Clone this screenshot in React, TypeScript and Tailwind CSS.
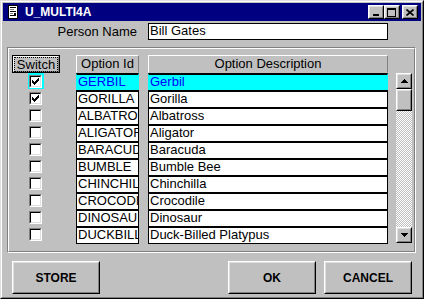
import React from "react";

const rows = [
  { id: "GERBIL", desc: "Gerbil", on: true },
  { id: "GORILLA", desc: "Gorilla", on: true },
  { id: "ALBATROSS", desc: "Albatross", on: false },
  { id: "ALIGATOR", desc: "Aligator", on: false },
  { id: "BARACUDA", desc: "Baracuda", on: false },
  { id: "BUMBLE", desc: "Bumble Bee", on: false },
  { id: "CHINCHILLA", desc: "Chinchilla", on: false },
  { id: "CROCODILE", desc: "Crocodile", on: false },
  { id: "DINOSAUR", desc: "Dinosaur", on: false },
  { id: "DUCKBILL", desc: "Duck-Billed Platypus", on: false },
];

function Raised({ className = "", children }: { className?: string; children?: React.ReactNode }) {
  return (
    <div className={`border border-t-white border-l-white border-r-black border-b-black ${className}`}>
      <div className="w-full h-full border border-t-[#dfdfdf] border-l-[#dfdfdf] border-r-[#808080] border-b-[#808080] bg-[#c0c0c0] flex items-center justify-center">
        {children}
      </div>
    </div>
  );
}

function Check() {
  const px: [number, number, number][] = [
    [6, 0, 1], [5, 1, 2], [0, 2, 1], [4, 2, 3], [0, 3, 2], [3, 3, 3], [0, 4, 5], [1, 5, 3], [2, 6, 1],
  ];
  return (
    <svg width="7" height="7" viewBox="0 0 7 7" shapeRendering="crispEdges">
      {px.map(([x, y, w], i) => (
        <rect key={i} x={x} y={y} width={w} height="1" fill="black" />
      ))}
    </svg>
  );
}

function Checkbox({ checked }: { checked: boolean }) {
  return (
    <div className="w-[13px] h-[13px] border border-t-[#808080] border-l-[#808080] border-r-white border-b-white">
      <div className="w-full h-full border border-t-black border-l-black border-r-[#dfdfdf] border-b-[#dfdfdf] bg-white flex items-center justify-center">
        {checked && <Check />}
      </div>
    </div>
  );
}

function Arrow({ down }: { down?: boolean }) {
  return (
    <svg width="7" height="4" viewBox="0 0 7 4" shapeRendering="crispEdges">
      <polygon points={down ? "0,0 7,0 3.5,4" : "3.5,0 7,4 0,4"} fill="black" />
    </svg>
  );
}

export default function App() {
  return (
    <div className="w-[424px] h-[299px] bg-[#c0c0c0] border border-t-[#dfdfdf] border-l-[#dfdfdf] border-r-black border-b-black font-['Liberation_Sans',Arial,sans-serif] text-black">
      <div className="w-full h-full border border-t-white border-l-white border-r-[#808080] border-b-[#808080] p-px">
        {/* title bar */}
        <div className="h-[18px] bg-[#000080] flex items-center">
          <svg width="10" height="14" viewBox="0 0 10 14" className="ml-[5px]" shapeRendering="crispEdges">
            <rect x="0" y="0" width="10" height="14" fill="white" />
            <rect x="0.5" y="0.5" width="9" height="13" fill="none" stroke="black" />
            <rect x="2" y="2" width="6" height="1" fill="black" />
            <rect x="2" y="4" width="4" height="1" fill="#808080" />
            <rect x="2" y="6" width="6" height="1" fill="black" />
            <rect x="2" y="8" width="3" height="1" fill="#808080" />
            <rect x="2" y="10" width="6" height="1" fill="black" />
            <rect x="6" y="8" width="2" height="2" fill="black" />
          </svg>
          <span className="ml-[7px] text-white font-bold text-[12px] leading-[14px]">U_MULTI4A</span>
          <div className="ml-auto flex items-center mr-[3px]">
            <Raised className="w-[16px] h-[14px]">
              <div className="w-[6px] h-[2px] bg-black mt-[6px] -ml-px" />
            </Raised>
            <Raised className="w-[16px] h-[14px]">
              <div className="w-[9px] h-[9px] border border-black border-t-2 -ml-px" />
            </Raised>
            <Raised className="w-[16px] h-[14px] ml-[2px]">
              <svg width="8" height="7" viewBox="0 0 8 7" className="-ml-px">
                <path d="M0.5 0.5 L7.5 6.5 M7.5 0.5 L0.5 6.5" stroke="black" strokeWidth="1.6" />
              </svg>
            </Raised>
          </div>
        </div>

        {/* person name */}
        <div className="mt-[2px] h-[17px] flex items-center text-[13px]">
          <div className="w-[134px] text-right leading-[17px]">Person Name</div>
          <div className="ml-[11px] w-[240px] h-[17px] border border-black bg-white pl-px leading-[13px]">Bill Gates</div>
        </div>

        {/* group box */}
        <div className="ml-[4px] mt-[7px] w-[409px] h-[206px] border border-t-[#808080] border-l-[#808080] border-r-white border-b-white">
          <div className="w-full h-full border border-t-white border-l-white border-r-[#808080] border-b-[#808080] flex items-start pt-[6px] text-[13px]">
            {/* switch + checkboxes */}
            <div className="w-[67px] flex flex-col">
              <div className="ml-[3px] w-[48px] h-[18px] border border-black">
                <div className="w-full h-full border border-t-white border-l-white border-r-[#808080] border-b-[#808080] flex items-center justify-center">
                  <span className="outline outline-1 outline-dotted outline-black leading-[13px] px-[2px]">Switch</span>
                </div>
              </div>
              {rows.map((r, i) => (
                <div key={r.id} className="h-[17px]">
                  <div className={`ml-[19px] w-[16px] h-[16px] pl-px pt-[2px] ${i === 0 ? "bg-[#00ffff]" : ""}`}>
                    <Checkbox checked={r.on} />
                  </div>
                </div>
              ))}
            </div>

            {/* option id */}
            <div className="w-[63px] flex flex-col">
              <div className="h-[18px] border border-t-white border-l-white border-r-[#808080] border-b-[#c0c0c0] flex items-center justify-center leading-[16px]">
                Option Id
              </div>
              {rows.map((r, i) => (
                <div
                  key={r.id}
                  className={`h-[17px] border-t-2 border-t-black border-x overflow-hidden whitespace-nowrap pl-px leading-[12px] pt-px ${
                    i === 0 ? "bg-[#00ffff] border-x-[#00ffff] text-[#0000ff]" : "bg-white border-x-black"
                  } ${i === rows.length - 1 ? "border-b border-b-black h-[18px]" : ""}`}
                >
                  {r.id}
                </div>
              ))}
            </div>

            {/* description */}
            <div className="ml-[9px] w-[240px] flex flex-col">
              <div className="h-[18px] border border-t-white border-l-white border-r-[#808080] border-b-[#c0c0c0] flex items-center justify-center leading-[16px]">
                Option Description
              </div>
              {rows.map((r, i) => (
                <div
                  key={r.id}
                  className={`h-[17px] border-t-2 border-t-black border-x overflow-hidden whitespace-nowrap pl-px leading-[12px] pt-px ${
                    i === 0 ? "bg-[#00ffff] border-x-[#00ffff] text-[#0000ff]" : "bg-white border-x-black"
                  } ${i === rows.length - 1 ? "border-b border-b-black h-[18px]" : ""}`}
                >
                  {r.desc}
                </div>
              ))}
            </div>

            {/* scrollbar */}
            <div className="ml-[8px] mt-[18px] w-[16px] h-[170px] flex flex-col">
              <Raised className="w-[16px] h-[16px]">
                <Arrow />
              </Raised>
              <Raised className="w-[16px] h-[22px]" />
              <div className="flex-1 bg-[image:repeating-conic-gradient(#ffffff_0_25%,#c0c0c0_0_50%)] bg-[length:2px_2px]" />
              <Raised className="w-[16px] h-[16px]">
                <Arrow down />
              </Raised>
            </div>
          </div>
        </div>

        {/* buttons */}
        <div className="mt-[8px] flex text-[12px] font-bold">
          <Raised className="ml-[9px] w-[88px] h-[33px]">STORE</Raised>
          <Raised className="ml-[128px] w-[88px] h-[33px]">OK</Raised>
          <Raised className="ml-[8px] w-[88px] h-[33px]">CANCEL</Raised>
        </div>
      </div>
    </div>
  );
}
